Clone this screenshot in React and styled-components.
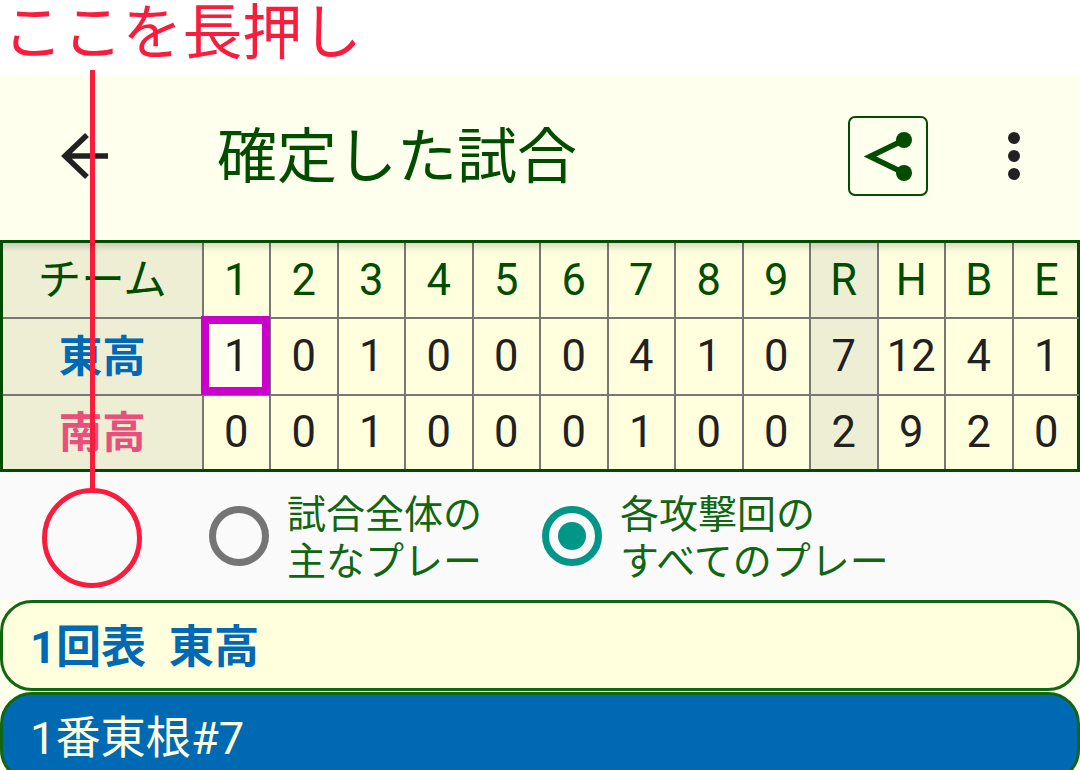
import React from 'react';
import styled, { createGlobalStyle } from 'styled-components';

const Global = createGlobalStyle`
  html, body { margin: 0; padding: 0; background: #ffffff; }
  body { font-family: Roboto, "Noto Sans CJK JP", sans-serif; }
`;
const Page = styled.div`
  position: relative; width: 1080px; height: 770px; overflow: hidden; background: #fff;
`;
const NoteBar = styled.div`
  height: 75px; box-sizing: border-box; padding-left: 3px;
  font-size: 59.8px; line-height: 68px; color: #f91c3d; white-space: nowrap;
`;
const Header = styled.header`
  height: 165px; box-sizing: border-box; padding-bottom: 3px; background: #ffffee; display: flex; align-items: center;
`;
const BackBtn = styled.div`
  width: 217px; display: flex; padding-left: 60px; box-sizing: border-box;
  svg { display: block; }
`;
const Title = styled.h1`
  margin: 3px 0 0; flex: 1; font-weight: 400; font-size: 60px; line-height: 80px; color: #004d00; white-space: nowrap;
`;
const ShareBtn = styled.div`
  width: 80px; height: 80px; box-sizing: border-box; border: 2px solid #004d00; border-radius: 7px;
  display: flex; align-items: center; justify-content: center; margin-right: 80px;
`;
const MoreBtn = styled.div`
  width: 12px; display: flex; flex-direction: column; gap: 6px; margin-right: 60px;
  span { width: 12px; height: 12px; border-radius: 50%; background: #212121; }
`;
const Score = styled.div`
  box-sizing: border-box; height: 232px; width: 1080px; border: 3px solid #004d00; background: #ffffdd;
  display: grid; grid-template-columns: 198.5px repeat(13, 67.5px); grid-template-rows: 74px 77px 1fr;
  position: relative;
  &::before {
    content: ''; position: absolute; left: 0; right: 0; top: 0; height: 9px; z-index: 2;
    background: linear-gradient(rgba(0, 0, 0, 0.14), rgba(0, 0, 0, 0));
  }
`;
const Cell = styled.div`
  display: flex; align-items: center; justify-content: center; box-sizing: border-box;
  border-left: ${p => (p.$first ? 'none' : '2px solid #777')};
  border-top: ${p => (p.$top ? 'none' : '2px solid #777')};
  padding-bottom: ${p => (p.$first ? '7px' : '0')};
  background: ${p => (p.$shade ? '#eeeed5' : 'transparent')};
  color: ${p => p.$color || '#212121'};
  font-size: 43.5px;
  font-weight: ${p => (p.$bold ? 700 : 400)};
  outline: ${p => (p.$mark ? '8px solid #cc00cc' : 'none')};
  outline-offset: -7px;
  ${p => (p.$mark ? 'background: #ffffee; z-index: 1;' : '')}
`;
const Modes = styled.div`
  height: 128px; background: #fafafa; display: flex; align-items: center;
`;
const RadioItem = styled.div`
  display: flex; align-items: center; margin-left: ${p => p.$ml}px;
`;
const RadioMark = styled.div`
  width: 60px; height: 60px; box-sizing: border-box; border-radius: 50%;
  border: 7px solid ${p => (p.$on ? '#009688' : '#757575')};
  display: flex; align-items: center; justify-content: center; flex: none;
  span { width: 28px; height: 28px; border-radius: 50%; background: #009688; display: ${p => (p.$on ? 'block' : 'none')}; }
`;
const RadioLabel = styled.div`
  margin-left: 18px; padding-top: 5px; font-size: 39px; line-height: 47px; color: #116611; white-space: nowrap;
`;
const List = styled.div`
  background: #ffffee; height: 170px;
`;
const Inning = styled.div`
  box-sizing: border-box; height: 91px; border: 3px solid #116611; border-radius: 32px;
  background: #ffffdd; color: #0069b4; font-weight: 700; font-size: 45.2px;
  display: flex; align-items: center; padding-left: 27px; padding-bottom: 5px; white-space: pre;
`;
const Batter = styled.div`
  box-sizing: border-box; height: 90px; border: 3px solid #116611; border-radius: 32px;
  background: #0069b4; color: #ffffdd; font-size: 45.2px; margin-top: 1px;
  display: flex; align-items: center; padding-left: 27px; padding-bottom: 5px; white-space: pre;
`;
const Leader = styled.div`
  position: absolute; left: 90px; top: 70px; width: 5px; height: 420px; background: #f91c3d;
`;
const Ring = styled.div`
  position: absolute; left: 42px; top: 488px; width: 100px; height: 100px; box-sizing: border-box;
  border: 5px solid #f91c3d; border-radius: 50%;
`;

const heads = ['1','2','3','4','5','6','7','8','9','R','H','B','E'];
const east = ['1','0','1','0','0','0','4','1','0','7','12','4','1'];
const south = ['0','0','1','0','0','0','1','0','0','2','9','2','0'];

export default function App() {
  return (
    <Page>
      <Global />
      <NoteBar>ここを長押し</NoteBar>
      <Header>
        <BackBtn>
          <svg width="50" height="50" viewBox="0 0 50 50" fill="none" stroke="#212121" strokeWidth="5.5">
            <path d="M48 25H5M27 4 5 25l22 21" />
          </svg>
        </BackBtn>
        <Title>確定した試合</Title>
        <ShareBtn>
          <svg width="70" height="70" viewBox="0 0 70 70">
            <path d="M51 19 17 35.5l34 16.5" fill="none" stroke="#004d00" strokeWidth="5.5" />
            <circle cx="51" cy="19" r="8" fill="#004d00" />
            <circle cx="51" cy="52" r="8" fill="#004d00" />
          </svg>
        </ShareBtn>
        <MoreBtn><span /><span /><span /></MoreBtn>
      </Header>
      <Score>
        <Cell $first $top $shade $color="#004d00">チーム</Cell>
        {heads.map(h => <Cell key={h} $top $shade={h === 'R'} $color="#004d00">{h}</Cell>)}
        <Cell $first $shade $bold $color="#0069b4">東高</Cell>
        {east.map((v, i) => <Cell key={i} $shade={i === 9} $mark={i === 0}>{v}</Cell>)}
        <Cell $first $shade $bold $color="#e8507c">南高</Cell>
        {south.map((v, i) => <Cell key={i} $shade={i === 9}>{v}</Cell>)}
      </Score>
      <Modes>
        <RadioItem $ml={209}>
          <RadioMark />
          <RadioLabel>試合全体の<br />主なプレー</RadioLabel>
        </RadioItem>
        <RadioItem $ml={60}>
          <RadioMark $on><span /></RadioMark>
          <RadioLabel>各攻撃回の<br />すべてのプレー</RadioLabel>
        </RadioItem>
      </Modes>
      <List>
        <Inning>1回表  東高</Inning>
        <Batter>1番東根#7</Batter>
      </List>
      <Leader />
      <Ring />
    </Page>
  );
}
